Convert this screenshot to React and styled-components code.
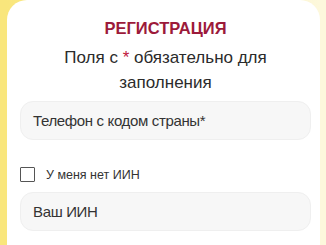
import React from "react";
import styled, { createGlobalStyle } from "styled-components";

const Global = createGlobalStyle`
  html, body { margin: 0; padding: 0; }
  body {
    width: 326px;
    height: 245px;
    overflow: hidden;
    background: #fbe886;
    font-family: "Liberation Sans", Arial, sans-serif;
  }
`;

const Page = styled.div`
  display: flex;
  height: 245px;
  padding-left: 7px;
  padding-right: 6px;
  background: linear-gradient(to right, #f9e67c 0, #f9e67c 7px, #fdf8dc 320px, #fdf8dc 326px);
`;

const Card = styled.div`
  flex: 1;
  background: #ffffff;
  border-radius: 20px 20px 0 0;
  padding: 17px 9px 0 13px;
  display: flex;
  flex-direction: column;
`;

const Title = styled.h1`
  margin: 0;
  text-align: center;
  font-size: 16.5px;
  font-weight: 700;
  color: #9c1a3a;
  line-height: 22px;
`;

const Subtitle = styled.p`
  margin: 6px 0 0;
  text-align: center;
  font-size: 17px;
  line-height: 25px;
  color: #2b2b2b;
`;

const Star = styled.span`
  color: #c0163c;
`;

const Field = styled.div`
  box-sizing: border-box;
  height: 39px;
  border-radius: 13px;
  background: #f7f7f7;
  border: 1px solid #efefef;
  display: flex;
  align-items: center;
  padding-left: 12px;
  font-size: 15px;
  letter-spacing: -0.35px;
  color: #333333;
  margin-top: ${(p) => p.$mt}px;
`;

const CheckRow = styled.label`
  display: flex;
  align-items: center;
  gap: 11px;
  height: 15px;
  margin-top: 27px;
  font-size: 12.5px;
  color: #333333;
`;

const Box = styled.span`
  box-sizing: border-box;
  width: 15px;
  height: 15px;
  border: 1.5px solid #555555;
  border-radius: 1px;
  background: #fff;
`;

export default function App() {
  return (
    <>
      <Global />
      <Page>
        <Card>
          <Title>РЕГИСТРАЦИЯ</Title>
          <Subtitle>
            Поля с <Star>*</Star> обязательно для
            <br />
            заполнения
          </Subtitle>
          <Field $mt={6}>Телефон с кодом страны*</Field>
          <CheckRow>
            <Box />
            У меня нет ИИН
          </CheckRow>
          <Field $mt={10}>Ваш ИИН</Field>
        </Card>
      </Page>
    </>
  );
}
